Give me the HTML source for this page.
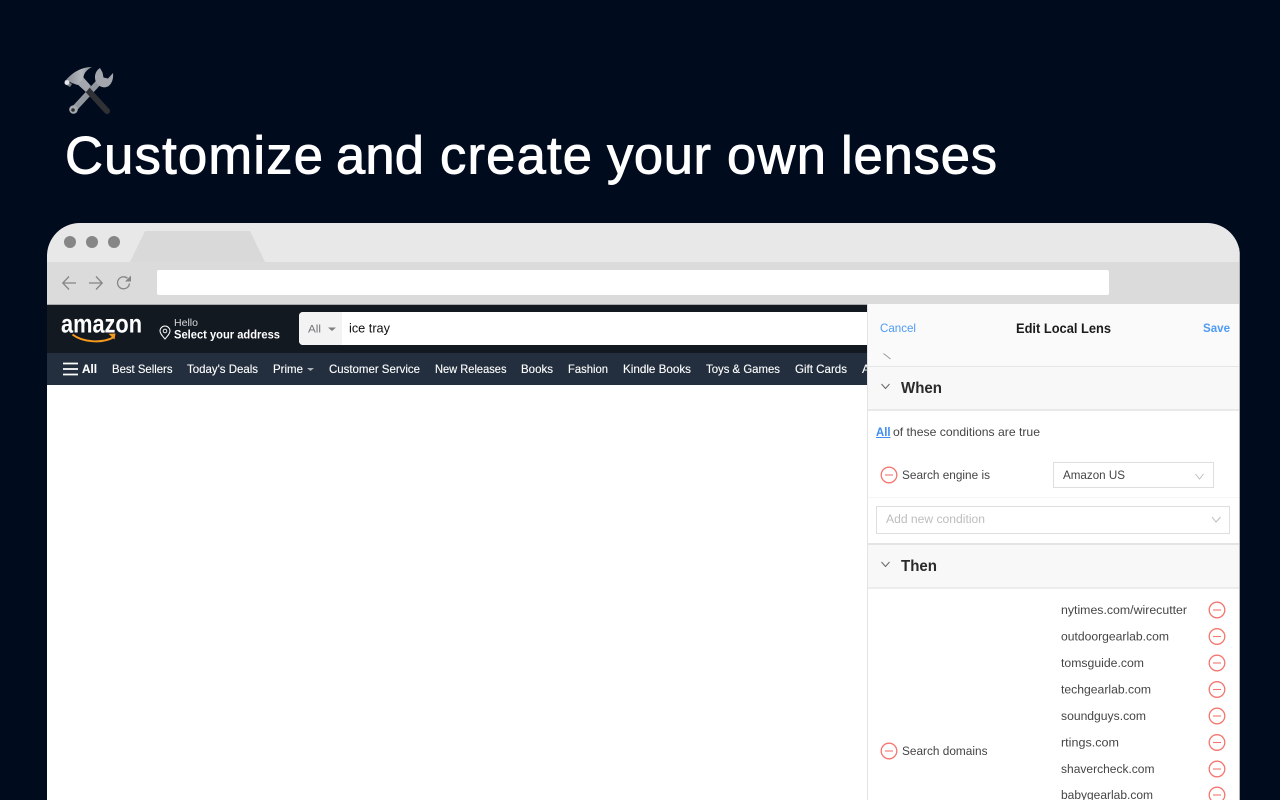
<!DOCTYPE html>
<html lang="en">
<head>
<meta charset="utf-8">
<title>Customize and create your own lenses</title>
<style>
html,body{margin:0;padding:0;width:1280px;height:800px;overflow:hidden;background:#000b1e}
svg{display:block;font-family:"Liberation Sans",sans-serif}
.soft{filter:url(#b)}
</style>
</head>
<body>
<svg width="1280" height="800" viewBox="0 0 1280 800" xmlns="http://www.w3.org/2000/svg">
<defs>
<filter id="b" x="-5%" y="-5%" width="110%" height="110%"><feGaussianBlur stdDeviation="0.3"/></filter>
<linearGradient id="steel" x1="0" y1="0" x2="1" y2="1"><stop offset="0" stop-color="#c9ccd1"/><stop offset=".5" stop-color="#8f939a"/><stop offset="1" stop-color="#a9adb3"/></linearGradient>
<linearGradient id="head" x1="0" y1="0" x2="1" y2="0"><stop offset="0" stop-color="#8a8d93"/><stop offset=".6" stop-color="#b4b7bc"/><stop offset="1" stop-color="#84878d"/></linearGradient>
<clipPath id="win"><path d="M47 800V256a33 33 0 0 1 33-33H1207a33 33 0 0 1 33 33V800Z"/></clipPath>
<g id="minus"><circle r="7.8" fill="none" stroke="#f4766e" stroke-width="1.3"/><path d="M-4 0H4" stroke="#f4766e" stroke-width="1.1"/></g>
</defs>
<rect width="1280" height="800" fill="#000b1e"/>

<!-- emoji: hammer and wrench -->
<g>
<path d="M74.500 108.500 L99 82" stroke="url(#steel)" stroke-width="6" stroke-linecap="round"/>
<circle cx="73.500" cy="109.500" r="4.300" fill="#a6a9ae"/>
<circle cx="73" cy="110" r="1.800" fill="#2a2c30"/>
<path d="M100 68C93 72 93 84 102 87C109 89 114 82 113 73L108 78.500L103.500 77.500L102.500 72.500Z" fill="#a3a6ac"/>
<path d="M85 87 L107 111" stroke="#2f3135" stroke-width="6" stroke-linecap="round"/>
<path d="M76 83 L83 77 L91 86 L86 92Z" fill="#a4a7ad"/>
<path d="M66 80C72 73 81 67 92 67C86 70 83.500 74 83.500 78L77.500 85L72 83Z" fill="url(#head)"/>
<path d="M65 80 L72 84 L70 87 L64.500 84Z" fill="#7b7e84"/>
<circle cx="67" cy="82.500" r="2.400" fill="#e4e7ec"/>
</g>

<g font-size="52.500" fill="#fff" stroke="#fff" stroke-width=".9">
<text x="65" y="173.500" textLength="258" lengthAdjust="spacing">Customize</text>
<text x="336" y="173.500" textLength="88" lengthAdjust="spacing">and</text>
<text x="440" y="173.500" textLength="152" lengthAdjust="spacing">create</text>
<text x="607" y="173.500" textLength="104" lengthAdjust="spacing">your</text>
<text x="727" y="173.500" textLength="99" lengthAdjust="spacing">own</text>
<text x="841" y="173.500" textLength="156" lengthAdjust="spacing">lenses</text>
</g>

<g clip-path="url(#win)">
<rect x="47" y="223" width="1193" height="39" fill="#e8e8e8"/>
<path d="M130 262 L145 231H250L265 262Z" fill="#d9d9d9"/>
<circle cx="70" cy="242" r="6" fill="#868686"/>
<circle cx="92" cy="242" r="6" fill="#868686"/>
<circle cx="114" cy="242" r="6" fill="#868686"/>
<rect x="47" y="262" width="1193" height="43" fill="#dbdbdb"/>
<g fill="none" stroke="#858585" stroke-width="1.300">
<path d="M76 283H63M69 276.500 62.800 283 69 289.500"/>
<path d="M89 283H102M96 276.500 102.200 283 96 289.500"/>
<path d="M129.500 283.500a6 6 0 1 1-2-5.200"/>
</g>
<path d="M131 275.500V281.500H125Z" fill="#858585"/>
<rect x="157" y="270" width="952" height="25" rx="2" fill="#fff"/>

<!-- page -->
<rect x="47" y="304" width="820" height="1" fill="#a9abad"/>
<rect x="47" y="305" width="820" height="48" fill="#131921"/>
<rect x="47" y="353" width="820" height="32" fill="#232f3e"/>
<rect x="47" y="385" width="820" height="415" fill="#fff"/>

<g class="soft">
<text x="61" y="332.500" font-size="26" font-weight="700" fill="#fff" textLength="81" lengthAdjust="spacingAndGlyphs">amazon</text>
<path d="M72.500 334.500C82 342 102 344 114 337" fill="none" stroke="#f49a1d" stroke-width="2"/>
<path d="M108.500 333.800 115.500 333.500 114.500 339.500Z" fill="#f49a1d"/>
<text x="174" y="326" font-size="10" fill="#d8d9da" textLength="24" lengthAdjust="spacingAndGlyphs">Hello</text>
<text x="174" y="338.500" font-size="12" font-weight="700" fill="#fff" textLength="106" lengthAdjust="spacingAndGlyphs">Select your address</text>
<path d="M165 339c-3-3.500-5-5.700-5-8a5 5 0 0 1 10 0c0 2.300-2 4.500-5 8Z" fill="none" stroke="#fff" stroke-width="1"/>
<circle cx="165" cy="331" r="1.800" fill="none" stroke="#fff" stroke-width=".9"/>
</g>

<path d="M867 312H303a4 4 0 0 0-4 4V341a4 4 0 0 0 4 4H867Z" fill="#fff"/>
<path d="M342 312H303a4 4 0 0 0-4 4V341a4 4 0 0 0 4 4H342Z" fill="#f3f3f3"/>
<g class="soft">
<text x="308" y="332.500" font-size="11" fill="#6f7276" textLength="13" lengthAdjust="spacingAndGlyphs">All</text>
<path d="M328 327.500H336L332 331Z" fill="#7c7f83"/>
<text x="349" y="332.500" font-size="13" fill="#111" textLength="41" lengthAdjust="spacingAndGlyphs">ice tray</text>

<path d="M63 363.500H78M63 369H78M63 374.500H78" stroke="#fff" stroke-width="1.800"/>
<g font-size="12" fill="#fff" stroke="#fff" stroke-width=".12">
<text x="82" y="373" font-weight="700" textLength="15" lengthAdjust="spacingAndGlyphs">All</text>
<text x="112" y="373" textLength="60.500" lengthAdjust="spacingAndGlyphs">Best Sellers</text>
<text x="187" y="373" textLength="71" lengthAdjust="spacingAndGlyphs">Today's Deals</text>
<text x="273" y="373" textLength="30" lengthAdjust="spacingAndGlyphs">Prime</text>
<text x="329" y="373" textLength="91" lengthAdjust="spacingAndGlyphs">Customer Service</text>
<text x="435" y="373" textLength="71.500" lengthAdjust="spacingAndGlyphs">New Releases</text>
<text x="521" y="373" textLength="32" lengthAdjust="spacingAndGlyphs">Books</text>
<text x="568" y="373" textLength="40" lengthAdjust="spacingAndGlyphs">Fashion</text>
<text x="623" y="373" textLength="68" lengthAdjust="spacingAndGlyphs">Kindle Books</text>
<text x="706" y="373" textLength="74" lengthAdjust="spacingAndGlyphs">Toys &amp; Games</text>
<text x="795" y="373" textLength="52" lengthAdjust="spacingAndGlyphs">Gift Cards</text>
<text x="862" y="373">A</text>
</g>
<path d="M307 368H314L310.500 371Z" fill="#aab0b7"/>
</g>

<!-- panel -->
<rect x="867" y="304" width="373" height="496" fill="#fff"/>
<rect x="867" y="304" width="372" height="62" fill="#fafafa"/>
<rect x="867" y="304" width="1" height="496" fill="#e3e3e3"/>
<rect x="1239" y="223" width="1" height="577" fill="#aeb0b3"/>
<rect x="868" y="366" width="371" height="44" fill="#f8f8f8"/>
<rect x="868" y="366" width="371" height="1" fill="#e6e6e6"/>
<rect x="868" y="409" width="371" height="2" fill="#e9e9e9"/>
<rect x="868" y="497" width="371" height="1" fill="#f6f6f6"/>
<rect x="876.500" y="506.500" width="353" height="27" fill="#fff" stroke="#dedede"/>
<rect x="1053.500" y="462.500" width="160" height="25" fill="#fff" stroke="#dedede"/>
<rect x="868" y="543" width="371" height="45" fill="#f8f8f8"/>
<rect x="868" y="543" width="371" height="2" fill="#e4e4e4"/>
<rect x="868" y="587" width="371" height="2" fill="#ececec"/>

<g class="soft">
<text x="880" y="332" font-size="12" fill="#4f9bf5" textLength="36" lengthAdjust="spacingAndGlyphs">Cancel</text>
<text x="1016" y="333" font-size="13.500" font-weight="700" fill="#1c1c1c" textLength="95" lengthAdjust="spacingAndGlyphs">Edit Local Lens</text>
<text x="1203" y="332" font-size="12" font-weight="700" fill="#4f9bf5" textLength="27" lengthAdjust="spacingAndGlyphs">Save</text>
<path d="M883.500 353.500 890.500 359" stroke="#9a9a9a" stroke-width="1"/>

<path d="M881.500 384 885.500 388.500 889.500 384" fill="none" stroke="#666" stroke-width="1"/>
<text x="901" y="393" font-size="15.500" font-weight="700" fill="#2b2b2b" textLength="41" lengthAdjust="spacingAndGlyphs">When</text>

<text x="876" y="436" font-size="12" font-weight="700" fill="#3d8bf0" textLength="14.500" lengthAdjust="spacingAndGlyphs">All</text>
<rect x="876" y="437" width="14.500" height="1" fill="#3d8bf0"/>
<text x="893" y="436" font-size="12" fill="#444" textLength="147" lengthAdjust="spacingAndGlyphs">of these conditions are true</text>

<use href="#minus" x="889" y="475"/>
<text x="902" y="479" font-size="12.300" fill="#444" textLength="88" lengthAdjust="spacingAndGlyphs">Search engine is</text>
<text x="1063" y="479" font-size="12.300" fill="#444" textLength="62" lengthAdjust="spacingAndGlyphs">Amazon US</text>
<path d="M1195.500 474 1199.500 479 1203.500 474" fill="none" stroke="#bdbdbd" stroke-width="1"/>

<text x="886" y="523" font-size="12.300" fill="#bdbdbd" textLength="99" lengthAdjust="spacingAndGlyphs">Add new condition</text>
<path d="M1212 517 1216 522 1220.500 517" fill="none" stroke="#bdbdbd" stroke-width="1"/>

<path d="M881.500 562 885.500 566.500 889.500 562" fill="none" stroke="#666" stroke-width="1"/>
<text x="901" y="571" font-size="15.500" font-weight="700" fill="#2b2b2b" textLength="36" lengthAdjust="spacingAndGlyphs">Then</text>

<use href="#minus" x="889" y="751"/>
<text x="902" y="755" font-size="12.300" fill="#444" textLength="85.500" lengthAdjust="spacingAndGlyphs">Search domains</text>

<g font-size="12.300" fill="#444">
<text x="1061" y="614" textLength="126" lengthAdjust="spacingAndGlyphs">nytimes.com/wirecutter</text>
<text x="1061" y="640.500" textLength="108" lengthAdjust="spacingAndGlyphs">outdoorgearlab.com</text>
<text x="1061" y="667" textLength="83" lengthAdjust="spacingAndGlyphs">tomsguide.com</text>
<text x="1061" y="693.500" textLength="90" lengthAdjust="spacingAndGlyphs">techgearlab.com</text>
<text x="1061" y="720" textLength="85" lengthAdjust="spacingAndGlyphs">soundguys.com</text>
<text x="1061" y="746.500" textLength="58" lengthAdjust="spacingAndGlyphs">rtings.com</text>
<text x="1061" y="773" textLength="93.500" lengthAdjust="spacingAndGlyphs">shavercheck.com</text>
<text x="1061" y="799" textLength="92" lengthAdjust="spacingAndGlyphs">babygearlab.com</text>
</g>
<use href="#minus" x="1217" y="610"/>
<use href="#minus" x="1217" y="636.500"/>
<use href="#minus" x="1217" y="663"/>
<use href="#minus" x="1217" y="689.500"/>
<use href="#minus" x="1217" y="716"/>
<use href="#minus" x="1217" y="742.500"/>
<use href="#minus" x="1217" y="769"/>
<use href="#minus" x="1217" y="795"/>
</g>
</g>
</svg>
</body>
</html>
